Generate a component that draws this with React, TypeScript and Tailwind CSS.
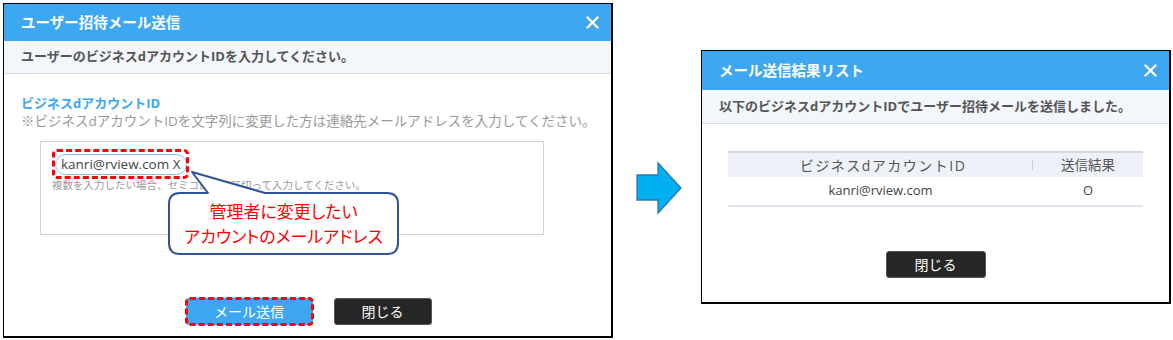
import React from "react";

const font = "font-['Open_Sans','Noto_Sans_CJK_JP',sans-serif]";

const CloseIcon = () => (
  <svg width="13" height="13" viewBox="0 0 13 13">
    <path d="M1.5 1.5 L11.5 11.5 M11.5 1.5 L1.5 11.5" stroke="#fff" strokeWidth="2.4" strokeLinecap="round" />
  </svg>
);

const Header = ({ title, h }: { title: string; h: string }) => (
  <div className={`flex items-center justify-between bg-[#3da7f2] pl-[17px] pr-[12px] ${h}`}>
    <span className="text-[14.5px] font-bold text-white">{title}</span>
    <CloseIcon />
  </div>
);

const SubBar = ({ text, h }: { text: string; h: string }) => (
  <div className={`flex items-center border-b border-[#d6dde6] bg-[#f3f6fb] pl-[17px] text-[13px] font-bold text-[#555] ${h}`}>
    {text}
  </div>
);

const Callout = () => (
  <div className="absolute left-[161px] top-[164px] h-[90px] w-[238px]">
    <svg width="238" height="90" viewBox="0 0 238 90" className="absolute left-0 top-0">
      <path
        d="M15 25 L43 25 L27 4 L100 25 L222 25 Q233 25 233 36 L233 75 Q233 86 222 86 L15 86 Q4 86 4 75 L4 36 Q4 25 15 25 Z"
        fill="#fff"
        stroke="#2f5597"
        strokeWidth="2"
        strokeLinejoin="round"
      />
    </svg>
    <div className="absolute left-[4px] top-[25px] flex h-[61px] w-[229px] flex-col items-center justify-center text-[17px] leading-[25px] text-[#ff0000] [font-feature-settings:'palt']">
      <span>管理者に変更したい</span>
      <span>アカウントのメールアドレス</span>
    </div>
  </div>
);

const InviteDialog = () => (
  <div className="relative flex h-[335px] w-[610px] flex-col border border-r-2 border-b-2 border-black bg-white">
    <Header title="ユーザー招待メール送信" h="h-[37px]" />
    <SubBar text="ユーザーのビジネスdアカウントIDを入力してください。" h="h-[33px]" />
    <div className="pl-[17px] pt-[20px]">
      <p className="text-[13px] font-bold leading-[18px] text-[#3da7f2]">ビジネスdアカウントID</p>
      <p className="text-[13.5px] leading-[18px] text-[#9a9a9a]">※ビジネスdアカウントIDを文字列に変更した方は連絡先メールアドレスを入力してください。</p>
    </div>
    <div className="ml-[36px] mt-[11px] h-[94px] w-[504px] border border-[#ccd3dc] pl-[11px] pt-[9px]">
      <div className="relative ml-[3px] inline-flex h-[21px] items-center rounded-full border border-[#7fbfee] px-[5px] text-[13.5px] text-[#444]">
        kanri@rview.com X
        <div className="absolute -bottom-[5px] -left-[4px] -right-[3px] -top-[6px] rounded-[5px] border-[3px] border-dashed border-[#ff0000]" />
      </div>
      <p className="mt-[2px] text-[10.5px] leading-[16px] text-[#9a9a9a]">複数を入力したい場合、セミコロンで区切って入力してください。</p>
    </div>
    <div className="mt-auto mb-[11px] flex justify-center gap-[21px] pl-[2px]">
      <div className="relative">
        <button className="h-[27px] w-[127px] rounded-[3px] bg-[#3da7f2] text-[14px] text-white">メール送信</button>
        <div className="absolute -inset-[1px] rounded-[5px] border-[3px] border-dashed border-[#ff0000]" />
      </div>
      <button className="h-[27px] w-[98px] rounded-[3px] border border-[#555] bg-[#262626] text-[14px] text-white">閉じる</button>
    </div>
    <Callout />
  </div>
);

const Arrow = () => (
  <svg width="48" height="54" viewBox="0 0 48 54" className="ml-[22px] mt-[158px] shrink-0">
    <path d="M2 14 H23 V2 L46 27 L23 52 V39 H2 Z" fill="#00b0f0" stroke="#2e75b6" strokeWidth="1.3" strokeLinejoin="miter" />
  </svg>
);

const ResultDialog = () => (
  <div className="ml-[18px] mt-[47px] flex h-[254px] w-[470px] flex-col border border-r-2 border-b-2 border-black bg-white">
    <Header title="メール送信結果リスト" h="h-[39px]" />
    <SubBar text="以下のビジネスdアカウントIDでユーザー招待メールを送信しました。" h="h-[34px]" />
    <div className="mx-[26px] mt-[27px]">
      <div className="flex h-[26px] items-center border-t-2 border-[#d3d9e2] bg-[#eef2f8] text-[14px] text-[#555]">
        <div className="flex-1 pl-[6px] text-center tracking-[1.5px]">ビジネスdアカウントID</div>
        <div className="h-[10px] w-px bg-[#cfcfcf]" />
        <div className="w-[110px] text-center text-[13.5px]">送信結果</div>
      </div>
      <div className="flex h-[30px] items-center border-b-2 border-[#dfe5ec] text-[13px] text-[#444]">
        <div className="flex-1 text-center">kanri@rview.com</div>
        <div className="w-[110px] text-center">O</div>
      </div>
    </div>
    <div className="mt-[44px] flex justify-center">
      <button className="h-[27px] w-[100px] rounded-[3px] border border-[#555] bg-[#262626] text-[14px] text-white">閉じる</button>
    </div>
  </div>
);

export default function App() {
  return (
    <div className={`flex h-[340px] w-[1173px] items-start bg-white pl-[3px] pt-[3px] ${font}`}>
      <InviteDialog />
      <Arrow />
      <ResultDialog />
    </div>
  );
}
